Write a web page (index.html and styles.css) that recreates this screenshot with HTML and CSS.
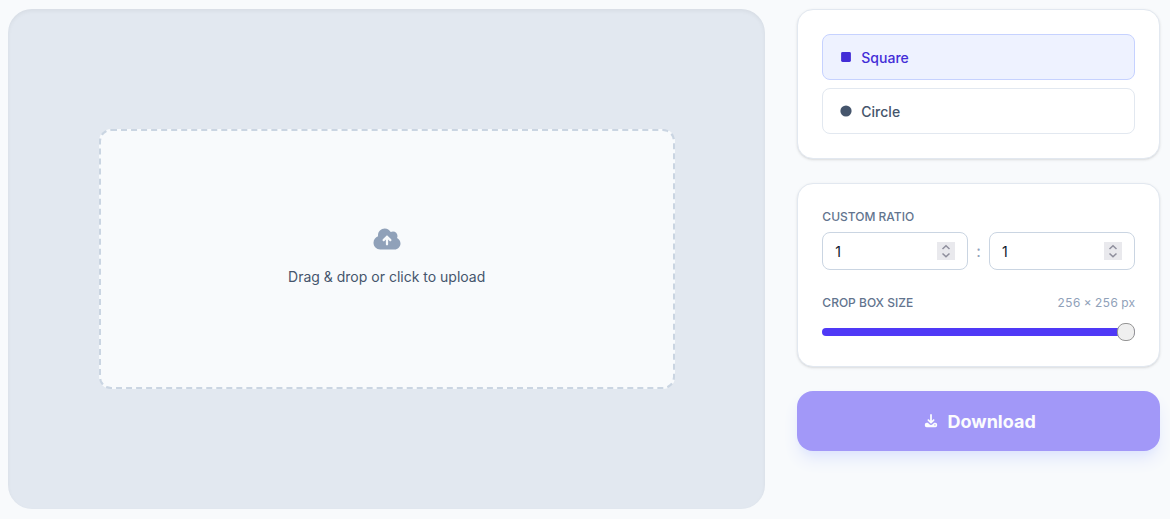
FILE: index.html
```html
<!DOCTYPE html>
<html lang="en">
<head>
<meta charset="utf-8">
<meta name="viewport" content="width=device-width, initial-scale=1">
<title>Image cropper</title>
<link rel="stylesheet" href="styles.css">
</head>
<body>
<main class="cropper">
  <section class="stage">
    <button type="button" class="dropzone">
      <svg class="cloud-icon" viewBox="0 0 576 512" aria-hidden="true"><path fill="currentColor" fill-rule="evenodd" d="M144 480c-79.500 0-144-64.500-144-144 0-63.400 41-117.200 97.900-136.500-1.300-7.700-1.900-15.500-1.900-23.500 0-79.500 64.500-144 144-144 55.400 0 103.500 31.300 127.600 77.100 14.200-8.300 30.800-13.100 48.400-13.100 53 0 96 43 96 96 0 15.700-3.800 30.600-10.500 43.700 44 20.300 74.500 64.700 74.500 116.300 0 70.700-57.300 128-128 128l-304 0zM305 191c-9.400-9.400-24.600-9.400-33.900 0l-72 72c-9.400 9.400-9.400 24.600 0 33.900s24.600 9.400 33.900 0l31-31 0 102.100c0 13.300 10.700 24 24 24s24-10.700 24-24l0-102.100 31 31c9.400 9.400 24.600 9.400 33.900 0s9.400-24.600 0-33.900l-72-72z"/></svg>
      <span>Drag &amp; drop or click to upload</span>
    </button>
  </section>
  <aside class="controls">
    <div class="card shapes">
      <button type="button" class="shape shape-active" aria-pressed="true">
        <svg class="shape-icon" viewBox="-96 0 640 512" aria-hidden="true"><rect fill="currentColor" y="32" width="448" height="448" rx="64"/></svg>
        <span class="caption">Square</span>
      </button>
      <button type="button" class="shape" aria-pressed="false">
        <svg class="shape-icon" viewBox="-64 0 640 512" aria-hidden="true"><circle fill="currentColor" cx="256" cy="256" r="256"/></svg>
        <span class="caption">Circle</span>
      </button>
    </div>
    <div class="card settings">
      <div class="field">
        <label class="label" for="ratio-w">CUSTOM RATIO</label>
        <div class="ratio">
          <input class="number" id="ratio-w" type="number" min="1" value="1">
          <span class="colon">:</span>
          <input class="number" id="ratio-h" type="number" min="1" value="1" aria-label="Ratio height">
        </div>
      </div>
      <div class="field">
        <div class="size-head">
          <label class="label" for="size">CROP BOX SIZE</label>
          <output class="size-value" for="size">256 × 256 px</output>
        </div>
        <input class="slider" id="size" type="range" min="32" max="256" value="256">
      </div>
    </div>
    <button type="button" class="download" disabled>
      <svg class="download-icon" viewBox="-96 0 640 512" aria-hidden="true"><path fill="currentColor" d="M256 32c0-17.700-14.300-32-32-32s-32 14.300-32 32l0 210.700-41.400-41.400c-12.500-12.500-32.800-12.500-45.300 0s-12.500 32.800 0 45.300l96 96c12.500 12.500 32.800 12.500 45.300 0l96-96c12.500-12.500 12.500-32.800 0-45.300s-32.800-12.500-45.300 0L256 242.700 256 32zM64 320c-35.300 0-64 28.700-64 64l0 32c0 35.300 28.700 64 64 64l320 0c35.300 0 64-28.700 64-64l0-32c0-35.300-28.700-64-64-64l-46.900 0-56.600 56.600c-31.200 31.200-81.900 31.200-113.100 0L110.900 320 64 320zm304 56a24 24 0 1 1 0 48 24 24 0 1 1 0-48z"/></svg>
      <span class="caption">Download</span>
    </button>
  </aside>
</main>
</body>
</html>
```
FILE: styles.css
```css
*, *::before, *::after {
  box-sizing: border-box;
}

body {
  margin: 0;
  background: #f8fafc;
  color: #0f172b;
  font-family: Inter, "Liberation Sans", sans-serif;
  font-size: 16px;
  line-height: 24px;
}

button, input {
  margin: 0;
  font: inherit;
  color: inherit;
}

.cropper {
  display: grid;
  grid-template-columns: repeat(3, minmax(0, 1fr));
  gap: 32px;
  padding: 9px 10px 10px 8px;
}

.stage {
  grid-column: span 2;
  display: flex;
  align-items: center;
  justify-content: center;
  min-height: 500px;
  padding: 32px;
  border-radius: 24px;
  background: #e2e8f0;
  box-shadow: inset 0 2px 4px rgb(0 0 0 / 5%);
}

.dropzone {
  display: flex;
  flex-direction: column;
  align-items: center;
  gap: 16px;
  width: 100%;
  max-width: 576px;
  padding: 96px 32px 100px;
  border: 2px dashed #cad5e2;
  border-radius: 12px;
  background: #f8fafc;
  color: #45556c;
  font-size: 14px;
  line-height: 20px;
}

.cloud-icon {
  width: 28px;
  height: 24px;
  color: #90a1b9;
}

.controls {
  display: flex;
  flex-direction: column;
  gap: 24px;
}

.card {
  display: flex;
  flex-direction: column;
  padding: 24px;
  border: 1px solid #e2e8f0;
  border-radius: 16px;
  background: #fff;
  box-shadow: 0 1px 3px rgb(0 0 0 / 10%), 0 1px 2px -1px rgb(0 0 0 / 10%);
}

.shapes {
  gap: 8px;
}

.shape {
  display: flex;
  align-items: center;
  gap: 8px;
  padding: 11px 16px;
  border: 1px solid #e2e8f0;
  border-radius: 8px;
  background: #fff;
  color: #45556c;
  font-size: 14px;
  font-weight: 500;
  line-height: 20px;
}

.shape-active {
  border-color: #c6d2ff;
  background: #eef2ff;
  color: #432dd7;
}

.shape-icon {
  width: 14px;
  height: 12px;
}

.caption {
  padding-top: 2px;
}

.settings {
  gap: 24px;
}

.field {
  display: flex;
  flex-direction: column;
}

.label, .size-value {
  font-size: 12px;
  line-height: 18px;
}

.label {
  color: #62748e;
  font-weight: 500;
}

.ratio {
  display: flex;
  align-items: center;
  gap: 8px;
  margin-top: 6px;
}

.number {
  flex: 1;
  min-width: 0;
  height: 38px;
  padding: 0 12px;
  border: 1px solid #cad5e2;
  border-radius: 8px;
  background: #fff;
  font-size: 14px;
}

.number::-webkit-inner-spin-button {
  appearance: none;
  width: 18px;
  height: 18px;
  opacity: 1;
  background: #e9e9ed url("data:image/svg+xml,%3Csvg xmlns='http://www.w3.org/2000/svg' width='18' height='18' fill='none' stroke='%238f8f9d' stroke-width='1.5'%3E%3Cpath d='M5.500 7 9 3.800 12.500 7M5.500 11.500 9 14.700 12.500 11.500'/%3E%3C/svg%3E") center / 18px 18px no-repeat;
}

.colon {
  color: #90a1b9;
}

.size-head {
  display: flex;
  justify-content: space-between;
}

.size-value {
  color: #90a1b9;
  font-variant-numeric: tabular-nums;
}

.slider {
  appearance: none;
  width: 100%;
  height: 8px;
  margin: 16px 0 6px;
  border-radius: 8px;
  background: #4f39f6;
}

.slider::-webkit-slider-thumb {
  appearance: none;
  width: 18px;
  height: 18px;
  border: 1px solid #959595;
  border-radius: 8px;
  background: #efefef;
}

.download {
  display: flex;
  align-items: center;
  justify-content: center;
  gap: 8px;
  padding: 15px 16px;
  border: 0;
  border-radius: 16px;
  background: #4f39f6;
  color: #fff;
  font-size: 18px;
  font-weight: 700;
  line-height: 28px;
  box-shadow: 0 10px 15px -3px #c6d2ff, 0 4px 6px -4px #c6d2ff;
  opacity: 0.5;
}

.download-icon {
  width: 18px;
  height: 14px;
}
```
